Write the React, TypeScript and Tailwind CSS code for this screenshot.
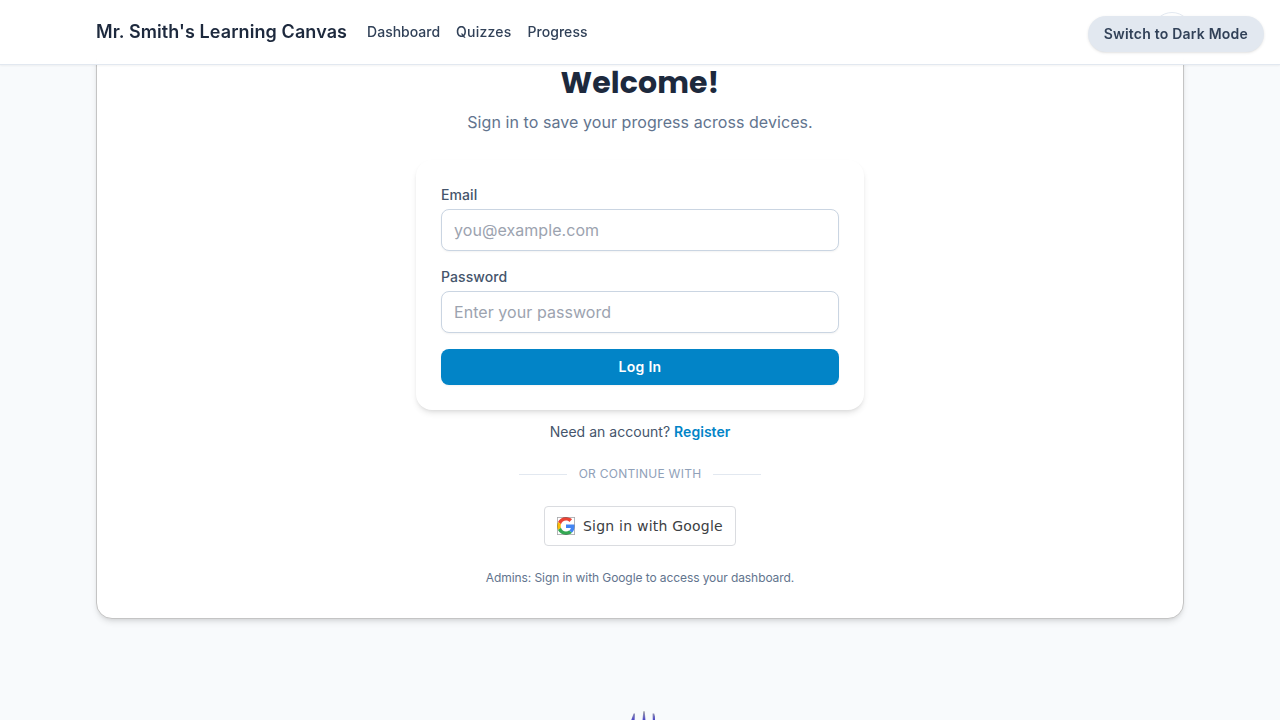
import React from "react";

function GoogleLogo() {
  return (
    <svg viewBox="0 0 48 48" className="size-[18px] shrink-0">
      <path fill="#EA4335" d="M24 9.5c3.54 0 6.71 1.22 9.21 3.6l6.85-6.85C35.9 2.38 30.47 0 24 0 14.62 0 6.51 5.38 2.56 13.22l7.98 6.19C12.43 13.72 17.74 9.5 24 9.5z" />
      <path fill="#4285F4" d="M46.98 24.55c0-1.57-.15-3.09-.38-4.55H24v9.02h12.94c-.58 2.96-2.26 5.48-4.78 7.18l7.73 6c4.51-4.18 7.09-10.36 7.09-17.65z" />
      <path fill="#FBBC05" d="M10.53 28.59c-.48-1.45-.76-2.99-.76-4.59s.27-3.14.76-4.59l-7.98-6.19C.92 16.46 0 20.12 0 24c0 3.88.92 7.54 2.56 10.78l7.97-6.19z" />
      <path fill="#34A853" d="M24 48c6.48 0 11.93-2.13 15.89-5.81l-7.73-6c-2.15 1.45-4.92 2.3-8.16 2.3-6.26 0-11.57-4.22-13.47-9.91l-7.98 6.19C6.51 42.62 14.62 48 24 48z" />
      <path fill="none" stroke="#5f6368" strokeOpacity=".85" strokeWidth="1.8" d="M.8.8h46.4v46.4H.8z" />
    </svg>
  );
}

function Header() {
  return (
    <header className="fixed inset-x-0 top-0 z-20 border-b border-slate-200 bg-white/95 shadow-xs backdrop-blur-sm">
      <div className="mx-auto flex h-16 w-[1088px] items-center">
        <a className="mr-5 text-lg font-semibold tracking-[0.09px] text-slate-800">Mr. Smith's Learning Canvas</a>
        <nav className="flex gap-4 text-sm font-medium text-slate-700">
          <a>Dashboard</a>
          <a className="tracking-[0.2px]">Quizzes</a>
          <a className="tracking-[0.06px]">Progress</a>
        </nav>
        <div className="mr-[-8px] ml-auto size-10 rounded-full border border-slate-200 bg-white" />
      </div>
    </header>
  );
}

function Field({ label, type, placeholder }: { label: string; type: string; placeholder: string }) {
  return (
    <label className="block">
      <span className="mb-1 block text-sm font-medium tracking-[0.08px] text-slate-600">{label}</span>
      <input
        type={type}
        placeholder={placeholder}
        className="block h-[42px] w-full rounded-lg border border-slate-300 bg-white px-3 text-base tracking-[0.06px] shadow-xs placeholder:text-[#9ca3af]"
      />
    </label>
  );
}

function Crown() {
  return (
    <svg viewBox="0 0 30 10" className="mx-auto mt-[91px] block h-[10px] w-[30px] shrink-0">
      <defs>
        <linearGradient id="tip" x1="0" x2="0" y1="0" y2="1">
          <stop offset="0" stopColor="#a8aaa8" />
          <stop offset="1" stopColor="#4a45c8" />
        </linearGradient>
      </defs>
      <path fill="url(#tip)" d="M8.6 3.5H10L9.6 10H6.3zM18.2 1.2h1.6l.6 8.8h-2.8zM27.6 3.5h1.6L31 10h-3.2z" />
    </svg>
  );
}

export default function App() {
  return (
    <div className="h-[720px] overflow-hidden bg-slate-50 font-['Inter',sans-serif] text-slate-800">
      <Header />
      <button className="fixed top-4 right-4 z-30 h-9 rounded-full bg-slate-200 px-4 text-sm font-semibold tracking-[0.21px] text-slate-700 shadow-sm">
        Switch to Dark Mode
      </button>
      <main className="pt-[33px]">
        <section className="mx-auto flex h-[586px] w-[1088px] flex-col items-center rounded-2xl border border-[#c4c4c4] bg-white pt-[31px] shadow-md">
          <h1 className="font-['Poppins','Inter',sans-serif] text-3xl leading-9 font-bold tracking-[0.08px]">Welcome!</h1>
          <p className="mt-[9px] text-base tracking-[0.07px] text-slate-500">Sign in to save your progress across devices.</p>
          <form className="mt-[26px] w-[448px] rounded-2xl bg-white p-[25px] shadow-md">
            <div className="flex flex-col gap-4">
              <Field label="Email" type="email" placeholder="you@example.com" />
              <Field label="Password" type="password" placeholder="Enter your password" />
              <button type="button" className="h-9 rounded-lg bg-[#0284c7] text-sm font-semibold tracking-[0.3px] text-white shadow-xs">
                Log In
              </button>
            </div>
          </form>
          <p className="mt-3 text-sm tracking-[0.03px] text-slate-600">
            Need an account? <a className="font-semibold text-[#0284c7]">Register</a>
          </p>
          <div className="mt-6 flex items-center gap-3 text-xs text-slate-400">
            <span className="h-px w-12 bg-slate-200" />
            <span className="tracking-[0.26px]">OR CONTINUE WITH</span>
            <span className="h-px w-12 bg-slate-200" />
          </div>
          <button className="mt-6 flex h-10 w-48 items-center rounded border border-[#dadce0] bg-white px-3 font-['DejaVu_Sans',sans-serif] text-sm tracking-[0.22px] text-[#3c4043]">
            <GoogleLogo />
            <span className="ml-2 whitespace-nowrap">Sign in with Google</span>
          </button>
          <p className="mt-6 text-xs tracking-[-0.085px] text-slate-500">Admins: Sign in with Google to access your dashboard.</p>
        </section>
      </main>
      <Crown />
    </div>
  );
}
